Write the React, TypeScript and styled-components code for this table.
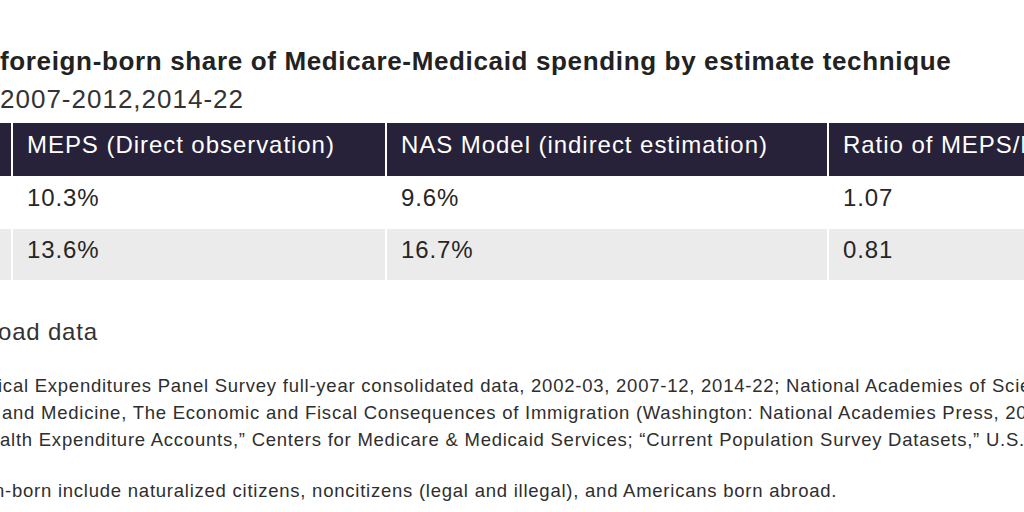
import styled, { createGlobalStyle } from "styled-components";

const SHIFT = 300;

const GlobalStyle = createGlobalStyle`
  html, body {
    margin: 0;
    padding: 0;
    background: #fff;
    overflow: hidden;
  }
  body {
    font-family: "Liberation Sans", Arial, sans-serif;
    color: #2a2a2a;
  }
`;

const Page = styled.div`
  margin-left: -${SHIFT}px;
  padding-top: 46px;
  width: 1800px;
`;

const Title = styled.h2`
  margin: 0;
  font-size: 26px;
  line-height: 30px;
  font-weight: 700;
  letter-spacing: 0.65px;
  color: #222;
  white-space: nowrap;
`;

const Subtitle = styled.p`
  margin: 8px 0 0;
  font-size: 26px;
  line-height: 30px;
  letter-spacing: 1px;
  color: #333;
  white-space: nowrap;
`;

// the part of a line that sits left of the window edge
const Lead = styled.span<{ $w: number }>`
  display: inline-block;
  width: ${(p) => p.$w}px;
  text-align: right;
  white-space: nowrap;
`;

const Table = styled.table`
  margin-top: 9px;
  border-collapse: separate;
  border-spacing: 0;
  table-layout: fixed;
  width: 1629px;
  font-size: 24px;
  line-height: 30px;
  letter-spacing: 0.9px;
`;

const HeadCell = styled.th`
  box-sizing: border-box;
  height: 53px;
  padding: 7px 14px 0;
  vertical-align: top;
  text-align: left;
  font-weight: 400;
  letter-spacing: 0.95px;
  color: #fff;
  background: #272239;
  border-right: 2px solid #fff;
  white-space: nowrap;
`;

const Cell = styled.td<{ $shade?: boolean }>`
  box-sizing: border-box;
  height: 52px;
  padding: 6px 14px 0;
  vertical-align: top;
  color: #262626;
  background: ${(p) => (p.$shade ? "#ebebeb" : "#fff")};
  border-right: 2px solid #fff;
  border-top: 1px solid #fff;
  white-space: nowrap;
`;

const Download = styled.div`
  margin-top: 37px;
  font-size: 24px;
  line-height: 30px;
  letter-spacing: 0.8px;
  color: #333;
  white-space: nowrap;
`;

const Notes = styled.div`
  margin-top: 25px;
  font-size: 18.5px;
  line-height: 27px;
  letter-spacing: 0.76px;
  color: #2e2e2e;
`;

const Line = styled.div`
  white-space: nowrap;
`;

const NoteBlock = styled.div`
  margin-top: 24px;
`;

const rows = [
  { label: "Medicare", meps: "10.3%", nas: "9.6%", ratio: "1.07" },
  { label: "Medicaid", meps: "13.6%", nas: "16.7%", ratio: "0.81" },
];

const App = () => {
  return (
    <>
      <GlobalStyle />
      <Page>
        <Title>
          <Lead $w={SHIFT}>Estimated&nbsp;</Lead>foreign-born share of
          Medicare-Medicaid spending by estimate technique
        </Title>
        <Subtitle>
          <Lead $w={SHIFT}>2002-2003,&nbsp;</Lead>2007-2012,2014-22
        </Subtitle>
        <Table>
          <colgroup>
            <col style={{ width: SHIFT + 13 }} />
            <col style={{ width: 374 }} />
            <col style={{ width: 442 }} />
            <col style={{ width: 500 }} />
          </colgroup>
          <thead>
            <tr>
              <HeadCell>Program</HeadCell>
              <HeadCell>MEPS (Direct observation)</HeadCell>
              <HeadCell>NAS Model (indirect estimation)</HeadCell>
              <HeadCell>Ratio of MEPS/NAS</HeadCell>
            </tr>
          </thead>
          <tbody>
            {rows.map((r, i) => (
              <tr key={r.label}>
                <Cell $shade={i % 2 === 1}>{r.label}</Cell>
                <Cell $shade={i % 2 === 1}>{r.meps}</Cell>
                <Cell $shade={i % 2 === 1}>{r.nas}</Cell>
                <Cell $shade={i % 2 === 1}>{r.ratio}</Cell>
              </tr>
            ))}
          </tbody>
        </Table>
        <Download>
          <Lead $w={SHIFT - 2}>Downl</Lead>oad data
        </Download>
        <Notes>
          <Line>
            <Lead $w={SHIFT - 2}>Source: Med</Lead>ical Expenditures Panel
            Survey full-year consolidated data, 2002-03, 2007-12, 2014-22;
            National Academies of Sciences, Engineering,
          </Line>
          <Line>
            <Lead $w={SHIFT + 2}>Engineering,&nbsp;</Lead>and Medicine, The
            Economic and Fiscal Consequences of Immigration (Washington:
            National Academies Press, 2017);
          </Line>
          <Line>
            <Lead $w={SHIFT}>“National He</Lead>alth Expenditure Accounts,”
            Centers for Medicare &amp; Medicaid Services; “Current Population
            Survey Datasets,” U.S. Census Bureau.
          </Line>
          <NoteBlock>
            <Line>
              <Lead $w={SHIFT - 6}>Note: Foreig</Lead>n-born include
              naturalized citizens, noncitizens (legal and illegal), and
              Americans born abroad.
            </Line>
          </NoteBlock>
        </Notes>
      </Page>
    </>
  );
};

export default App;
